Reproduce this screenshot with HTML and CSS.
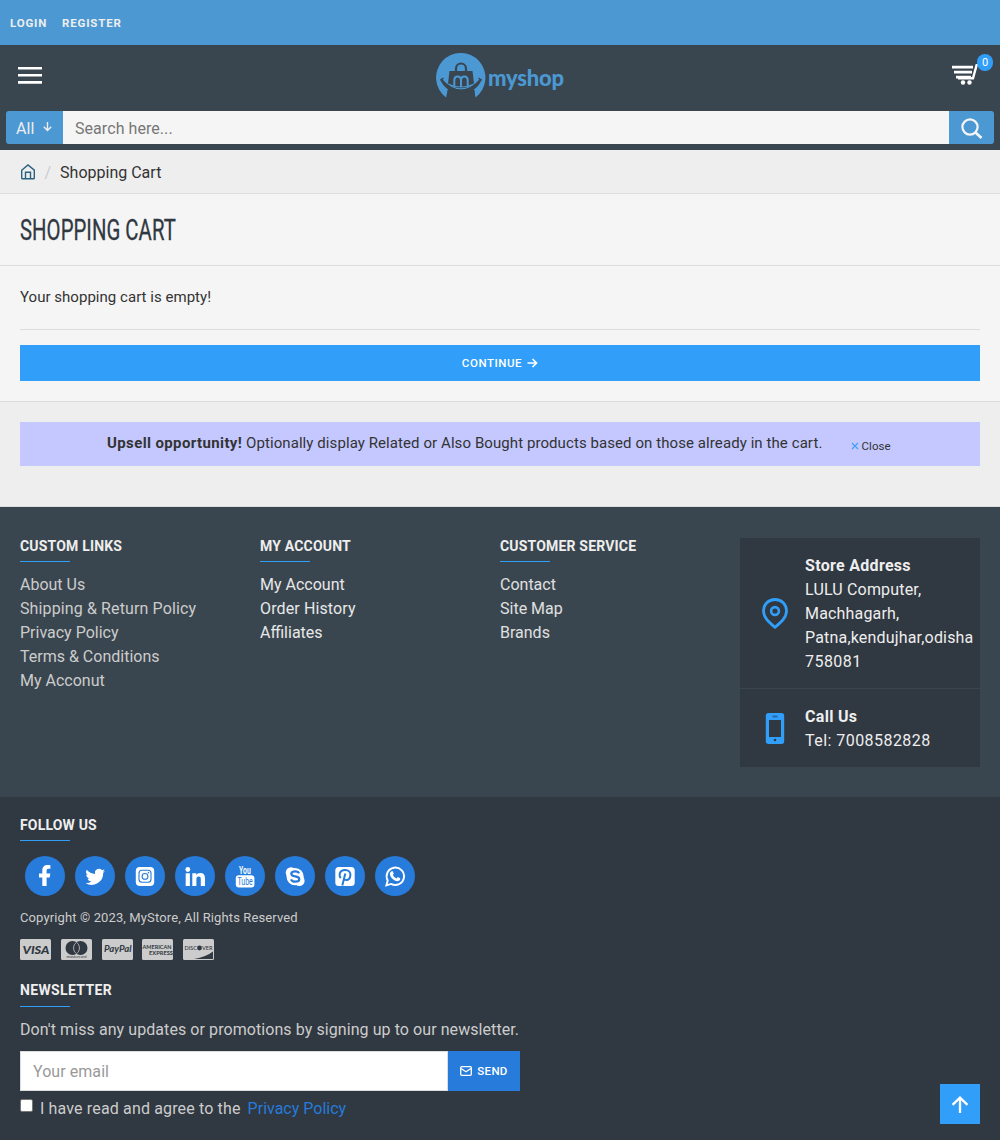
FILE: index.html
```html
<!DOCTYPE html>
<html lang="en">
<head>
<meta charset="utf-8">
<title>Shopping Cart</title>
<link rel="stylesheet" href="styles.css">
</head>
<body>
<nav class="topbar"><a>LOGIN</a><a>REGISTER</a></nav>
<header class="header">
  <div class="brandbar">
    <svg class="menu" width="24" height="18" viewBox="0 0 24 18"><path d="M0 2.300h24M0 9.300h24M0 16.400h24" stroke="#fff" stroke-width="2.600"/></svg>
    <div class="logo">
      <svg width="50" height="46" viewBox="0 0 50 46">
        <path d="M10 44.500A24.700 24.700 0 1 1 39.500 44.500L38 36.500Q44 32 46 25.500Q38 34.500 25 34.500Q12 34.500 4 25.500Q6 32 12 36.500Z" fill="#4b98d3"/>
        <path d="M11.500 37Q25 41 38.500 37L39 46H11z" fill="#3a464f"/>
        <path d="M13.500 18h23l1.500 12.500q-13 6-26 0z" fill="#3a464f"/>
        <path d="M20 18v-2.500a5 5 0 0 1 10 0v2.500" fill="none" stroke="#3a464f" stroke-width="2.200"/>
        <path d="M18.300 33.500v-6q0-4 3.350-4t3.350 4v6.500M25 27.500q0-4 3.350-4t3.350 4v6" fill="none" stroke="#4b98d3" stroke-width="2"/>
        <path d="M5.500 26q19.500 20 39 0" fill="none" stroke="#4b98d3" stroke-width="1.600"/>
        <path d="M5 26q20 22.500 40 0M4.500 27.500l3-2.500M42.500 25l3 2.500" fill="none" stroke="#3a464f" stroke-width="1.400"/>
      </svg>
      <span class="logo-text">myshop</span>
    </div>
    <div class="cart">
      <svg width="28" height="23" viewBox="0 0 28 23"><path d="M0 3.200h21M2 8.200h18M4 13.100h15" stroke="#fff" stroke-width="2.700"/><path d="M28 .4h-3.200l-3.800 13.800H6" fill="none" stroke="#fff" stroke-width="2.400"/><circle cx="11" cy="18.500" r="2.200" fill="#fff"/><circle cx="17.500" cy="18.500" r="2.200" fill="#fff"/></svg>
      <span class="badge">0</span>
    </div>
  </div>
  <div class="search">
    <button class="all">All <svg width="9" height="10" viewBox="0 0 9 10"><path d="M4.500 0v8.500M.8 4.800l3.700 3.700 3.700-3.700" fill="none" stroke="#eee" stroke-width="1.400"/></svg></button>
    <div class="query">Search here...</div>
    <button class="go"><svg width="22" height="21" viewBox="0 0 22 21"><circle cx="9" cy="9" r="7.600" fill="none" stroke="#f5f5f5" stroke-width="2.200"/><path d="M14.500 14.500l6 5.500" stroke="#f5f5f5" stroke-width="2.600"/></svg></button>
  </div>
</header>
<div class="crumbs">
  <svg width="16" height="16" viewBox="0 0 16 16"><path d="M1.700 6.200L8 1l6.300 5.200V14a.8.800 0 0 1-.8.800h-11a.8.800 0 0 1-.8-.8zM5.500 14.800V8.200h5v6.600" fill="none" stroke="#2b6181" stroke-width="1.400"/></svg>
  <span class="slash">/</span><span class="here">Shopping Cart</span>
</div>
<div class="title"><h1>SHOPPING CART</h1></div>
<main class="content">
  <p class="empty">Your shopping cart is empty!</p>
  <button class="continue"><span>CONTINUE</span><svg width="11" height="10" viewBox="0 0 11 10"><path d="M.5 5h9M5.500 1l4 4-4 4" fill="none" stroke="#fff" stroke-width="1.700"/></svg></button>
</main>
<section class="upsell-wrap">
  <div class="upsell"><span class="msg"><b>Upsell opportunity!</b> Optionally display Related or Also Bought products based on those already in the cart.</span>
    <span class="close"><svg width="8" height="8" viewBox="0 0 8 8"><path d="M1 1l6 6M7 1L1 7" stroke="#3a9ff7" stroke-width="1.100"/></svg>Close</span></div>
</section>
<footer>
  <div class="links">
    <div class="col dim"><h3>CUSTOM LINKS</h3><a>About Us</a><a class="wide">Shipping &amp; Return Policy</a><a>Privacy Policy</a><a>Terms &amp; Conditions</a><a>My Acconut</a></div>
    <div class="col bright"><h3>MY ACCOUNT</h3><a>My Account</a><a class="wide">Order History</a><a>Affiliates</a></div>
    <div class="col"><h3>CUSTOMER SERVICE</h3><a>Contact</a><a>Site Map</a><a>Brands</a></div>
    <div class="contact">
      <div class="card address"><svg width="26" height="31" viewBox="0 0 26 31"><path d="M13 1.500C6.400 1.500 1.500 6.600 1.500 13c0 7 6.500 12 11.500 16.300C18 25 24.500 20 24.500 13 24.500 6.600 19.600 1.500 13 1.500z" fill="none" stroke="#319ffa" stroke-width="2.800"/><circle cx="13" cy="13" r="3.900" fill="none" stroke="#319ffa" stroke-width="2.600"/></svg>
        <p><b>Store Address</b><br>LULU Computer,<br>Machhagarh,<br>Patna,kendujhar,odisha<br><span class="digits">758081</span></p></div>
      <div class="card phone"><svg width="26" height="31" viewBox="0 0 26 31"><path fill-rule="evenodd" d="M6.500 0h13a2.700 2.700 0 0 1 2.700 2.700v25.600a2.700 2.700 0 0 1-2.700 2.700h-13a2.700 2.700 0 0 1-2.700-2.700V2.700A2.700 2.700 0 0 1 6.500 0zM7 7v17h12V7z" fill="#319ffa"/><path d="M10.500 3.500h5" stroke="#28659a" stroke-width="1.800"/><circle cx="13" cy="27" r="1.300" fill="#303841"/></svg>
        <p><b>Call Us</b><br><span class="digits">Tel: 7008582828</span></p></div>
    </div>
  </div>
  <div class="bottom">
    <h3>FOLLOW US</h3>
    <div class="social">
      <a><svg viewBox="0 0 40 40"><path d="M17.300 30V21.500H14v-4h3.300v-3c0-3.600 2-5.500 5.200-5.500 1.500 0 2.900.2 2.900.2v3.500h-1.800c-1.600 0-2 .9-2 2v2.800h3.700l-.6 4h-3.100V30z"/></svg></a>
      <a><svg viewBox="0 0 40 40"><path d="M30 14.900a8 8 0 0 1-2.200.6 4 4 0 0 0 1.700-2.200 8 8 0 0 1-2.500 1 4 4 0 0 0-6.900 3.600 11.500 11.500 0 0 1-8.300-4.200 4 4 0 0 0 1.200 5.400 4 4 0 0 1-1.800-.5c0 2 1.400 3.600 3.200 4a4 4 0 0 1-1.800.1 4 4 0 0 0 3.800 2.800A8.200 8.200 0 0 1 10.500 27a11.500 11.500 0 0 0 17.700-10.200q1-.8 1.800-1.900z"/></svg></a>
      <a><svg viewBox="0 0 40 40"><rect x="10.800" y="11" width="18.400" height="19" rx="4"/><rect x="14" y="14.300" width="12" height="12" rx="3" fill="none" stroke="#267bdb" stroke-width="1.100"/><circle cx="20" cy="20.400" r="2.900" fill="none" stroke="#267bdb" stroke-width="1.100"/><circle cx="23.500" cy="16.800" r=".8" fill="#267bdb"/></svg></a>
      <a><svg viewBox="0 0 40 40"><circle cx="12.800" cy="13.500" r="2.400"/><path d="M10.700 17.200h4.200V30h-4.200zM17.300 17.200h4v1.800c.7-1.300 2-2.100 4-2.100 4 0 4.700 2.600 4.700 6V30h-4.200v-6.200c0-1.500 0-3.300-2.100-3.300s-2.300 1.600-2.300 3.200V30h-4.100z"/></svg></a>
      <a><svg viewBox="0 0 40 40"><g transform="translate(14 17.800) scale(.72 1.100)"><text font-size="9.500" font-weight="700">You</text></g><rect x="10.800" y="19.200" width="18.600" height="12.300" rx="3"/><g transform="translate(12.500 29) scale(.75 1.100)"><text font-size="9.300" class="tube">Tube</text></g></svg></a>
      <a><svg viewBox="0 0 40 40"><circle cx="16" cy="16.500" r="5.300"/><circle cx="24.300" cy="24.800" r="5.300"/><circle cx="20.100" cy="20.600" r="8.600"/><path d="M24 17.300q-.8-2-3.700-2-4 0-4 2.500 0 2 4 2.600t4 2.800q0 2.500-4 2.500-3.400 0-4.300-2.400" fill="none" stroke="#267bdb" stroke-width="2.200"/></svg></a>
      <a><svg viewBox="0 0 40 40"><rect x="10.300" y="11" width="19.400" height="19" rx="3.500"/><path d="M15.800 22q-1.500-1.400-1.200-3.800c.5-2.700 2.700-4.200 5.700-4.200 3.200 0 5.300 2 5.100 4.900-.2 3.300-1.900 5.200-4.100 5.200-1.500 0-2-.8-2.200-1.200M20.300 17.500l-3 12" fill="none" stroke="#267bdb" stroke-width="2"/></svg></a>
      <a><svg viewBox="0 0 40 40"><path d="M11.400 29.300l1.300-4.800a8.700 8.700 0 1 1 3.400 3.400z" fill="none" stroke="#fff" stroke-width="1.900"/><path d="M16.200 15.500q1-1 1.700-.1l.9 2.300-1 1.400q1.300 2.500 3.800 3.400l1.200-1.400 2.400 1.200q.4 2.600-2.600 2.900c-3.600 0-8.500-4.700-7.600-8.200q.3-.9 1.200-1.500z"/></svg></a>
    </div>
    <p class="copy">Copyright © 2023, MyStore, All Rights Reserved</p>
    <div class="cards">
      <svg viewBox="0 0 31 21"><rect width="31" height="21" rx="1.500"/><text x="2.500" y="15" font-size="12" font-weight="900" font-style="italic" textLength="27" lengthAdjust="spacingAndGlyphs">VISA</text></svg>
      <svg viewBox="0 0 31 21"><rect width="31" height="21" rx="1.500"/><circle cx="11.500" cy="9" r="7" class="dark"/><circle cx="19.500" cy="9" r="7" class="dark"/><path d="M15.500 3.300a7 7 0 0 1 0 11.400 7 7 0 0 1 0-11.400z" fill="#303841" stroke="#ccc" stroke-width=".8"/><text x="5.500" y="19.300" font-size="4" textLength="20" lengthAdjust="spacingAndGlyphs">mastercard</text></svg>
      <svg viewBox="0 0 31 21"><rect width="31" height="21" rx="1.500"/><text x="2" y="13" font-size="8.500" font-weight="700" font-style="italic" textLength="27.500" lengthAdjust="spacingAndGlyphs">PayPal</text></svg>
      <svg viewBox="0 0 31 21"><rect width="31" height="21" rx="1.500"/><text x=".5" y="9.700" font-size="6" font-weight="700" textLength="29" lengthAdjust="spacingAndGlyphs">AMERICAN</text><text x="7" y="15.800" font-size="6" font-weight="700" textLength="24" lengthAdjust="spacingAndGlyphs">EXPRESS</text></svg>
      <svg viewBox="0 0 31 21"><rect width="31" height="21" rx="1.500"/><text x="1.500" y="11" font-size="5.500" font-weight="500" textLength="12.500" lengthAdjust="spacingAndGlyphs">DISC</text><circle cx="16.500" cy="9" r="2.400" class="dark"/><text x="19" y="11" font-size="5.500" font-weight="500" textLength="10.500" lengthAdjust="spacingAndGlyphs">VER</text><path d="M11 20Q23 18 30 12.500V20z" class="dark"/></svg>
    </div>
    <h3 class="news-title">NEWSLETTER</h3>
    <p class="news">Don't miss any updates or promotions by signing up to our newsletter.</p>
    <div class="signup"><div class="email">Your email</div><button class="send"><svg width="12" height="10" viewBox="0 0 12 10"><rect x=".7" y=".7" width="10.600" height="8.600" rx="1" fill="none" stroke="#fff" stroke-width="1.300"/><path d="M1 2.500l5 3.300 5-3.300" fill="none" stroke="#fff" stroke-width="1.300"/></svg><span>SEND</span></button></div>
    <div class="agree"><span class="box"></span><span class="agree-text">I have read and agree to the</span><a>Privacy Policy</a></div>
  </div>
</footer>
<a class="totop"><svg width="18" height="17" viewBox="0 0 18 17"><path d="M9 17V2M1.500 8.800L9 1.600l7.500 7.200" fill="none" stroke="#fff" stroke-width="2.300"/></svg></a>
</body>
</html>
```
FILE: styles.css
```css
* { box-sizing: border-box; }
body { margin: 0; background: #eee; color: #333; font: 16px/24px Roboto, "Noto Sans", sans-serif; letter-spacing: .06px; }
p, h1, h3 { margin: 0; }
svg { display: block; flex: none; }
button { border: 0; padding: 0; font: inherit; letter-spacing: inherit; color: #fff; display: flex; align-items: center; }
.topbar { height: 45px; background: #4b98d3; display: flex; align-items: center; gap: 15px; padding: 1px 0 0 10px; font-size: 11.5px; font-weight: 700; color: #eee; letter-spacing: .8px; }
.header { height: 105px; background: #3a464f; }
.brandbar { height: 66px; padding: 0 7px 0 18px; display: grid; grid-template-columns: 418px 128px 1fr; }
.menu { margin-top: 21px; }
.logo { display: flex; padding-top: 8px; }
.logo-text { font: 900 22px/26px Lato, sans-serif; color: #4b98d3; margin: 12px 0 0 2px; letter-spacing: -.2px; }
.cart { justify-self: end; position: relative; width: 41px; padding-top: 19px; }
.badge { position: absolute; right: 0; top: 9px; width: 16px; height: 17px; border-radius: 9px; background: #319ffa; color: #fff; font-size: 11px; line-height: 17px; text-align: center; }
.search { display: flex; height: 33px; margin: 0 6px; }
.all { width: 57px; background: #4b98d3; border-radius: 3px 0 0 3px; padding: 2px 0 0 10px; gap: 9px; color: #eee; }
.all svg { margin-top: -4px; }
.query { flex: 1; background: #f5f5f5; color: #777; padding: 6px 12px; }
.go { width: 45px; background: #4b98d3; border-radius: 0 3px 3px 0; justify-content: center; padding-top: 2px; }
.crumbs { height: 44px; border-bottom: 1px solid #ddd; display: flex; align-items: center; padding: 2px 20px 0; letter-spacing: 0; }
.crumbs svg { margin-top: -2px; }
.slash { color: #ccc; margin: 0 9px 0 8.500px; }
.title { height: 72px; background: #f5f5f5; border-bottom: 1px solid #ddd; padding: 16px 20px; }
h1 { font: 400 29px/40px Roboto, sans-serif; display: inline-block; transform: scaleX(.7); transform-origin: 0 0; white-space: nowrap; color: #303841; -webkit-text-stroke: .3px #303841; }
.content { background: #f5f5f5; height: 136px; border-bottom: 1px solid #ddd; padding: 19px 20px 0; }
.empty { font-size: 15px; height: 45px; border-bottom: 1px solid #ddd; letter-spacing: .03px; }
.continue { width: 100%; height: 36px; background: #319ffa; margin-top: 15px; justify-content: center; gap: 5px; font-size: 11.5px; font-weight: 500; letter-spacing: .55px; }
.upsell-wrap { height: 105px; padding: 20px; border-bottom: 1px solid #ddd; }
.upsell { height: 44px; background: #c4c8ff; display: flex; padding: 9px 0 0 87px; font-size: 15px; white-space: nowrap; letter-spacing: .08px; }
.msg b { letter-spacing: .38px; }
.close { display: flex; align-items: center; gap: 2px; margin-left: 29px; height: 30px; font-size: 11.500px; }
.links { height: 290px; background: #3a464f; padding: 31px 20px 0; display: grid; grid-template-columns: repeat(4, 240px); align-items: start; color: #e0e0e0; letter-spacing: 0; }
.col a { display: block; }
.col .wide { letter-spacing: .12px; }
.dim { color: #ccc; }
.bright { color: #e8e8e8; }
h3 { font-size: 14px; line-height: 16px; font-weight: 700; color: #eee; padding-bottom: 8px; margin-bottom: 11px; letter-spacing: .18px; background: linear-gradient(#319ffa, #319ffa) 0 100% / 50px 1px no-repeat; }
.card { background: #303841; display: flex; align-items: center; padding: 0 0 0 22px; color: #eee; }
.card p { margin-left: 17px; padding-top: 2px; letter-spacing: .18px; }
.card b { letter-spacing: .3px; }
.card .digits { letter-spacing: .45px; }
.address { height: 150px; }
.phone { height: 78px; margin-top: 1px; }
.bottom { height: 343px; background: #303841; padding: 20px; color: #ccc; }
.bottom h3 { height: 24px; margin: 0; }
.bottom .news-title { height: 25px; letter-spacing: .35px; }
.social { display: flex; gap: 10px; padding: 15px 5px 0; }
.social a { width: 40px; height: 40px; border-radius: 50%; background: #267bdb; fill: #fff; }
.social text { font-family: Roboto, sans-serif; letter-spacing: 0; }
.social .tube { fill: #267bdb; }
.copy { font-size: 13px; margin: 10px 0 9px; letter-spacing: .12px; }
.cards { display: flex; gap: 9.8px; height: 21px; margin-bottom: 22px; fill: #ccc; }
.cards svg { width: 31px; height: 21px; }
.cards text, .dark { fill: #303841; font-family: Lato, sans-serif; letter-spacing: 0; }
.news { margin-top: 11px; letter-spacing: .075px; }
.signup { display: flex; height: 40px; width: 500px; margin-top: 9px; }
.email { flex: 1; background: #fff; border: 1px solid #ddd; color: #999; padding: 8px 12px; }
.send { width: 72px; background: #267bdb; justify-content: center; gap: 5px; font-size: 11.5px; font-weight: 500; letter-spacing: .3px; }
.agree { display: flex; align-items: flex-start; padding-top: 6px; }
.agree-text { letter-spacing: .15px; }
.agree a { color: #267bdb; margin-left: 7px; letter-spacing: 0; }
.box { width: 13px; height: 13px; margin: 2px 7px 0 0; background: #fff; border: 1px solid #777; border-radius: 2px; }
.totop { position: fixed; right: 20px; bottom: 16px; width: 40px; height: 40px; background: #319ffa; display: grid; place-items: center; }
```
